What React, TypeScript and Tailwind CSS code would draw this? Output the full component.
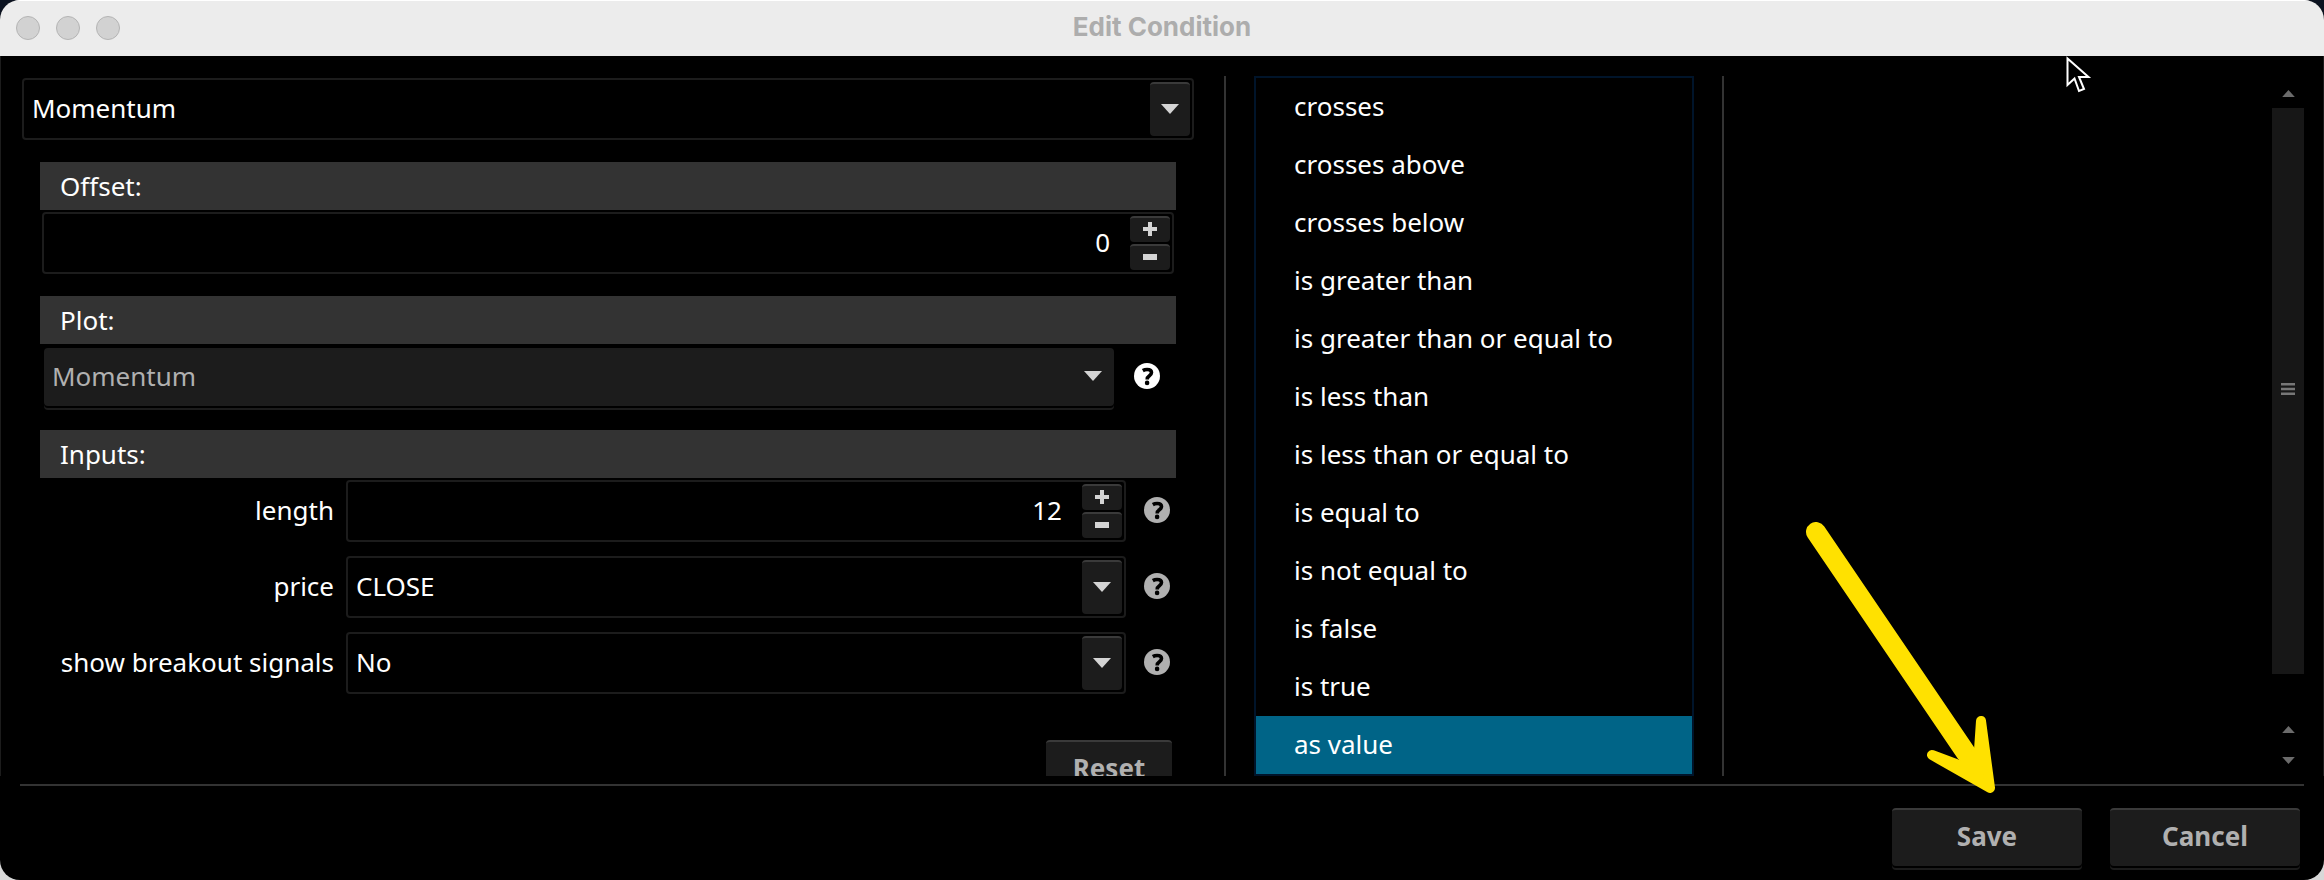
import { useState } from 'react';

const operators = [
  'crosses',
  'crosses above',
  'crosses below',
  'is greater than',
  'is greater than or equal to',
  'is less than',
  'is less than or equal to',
  'is equal to',
  'is not equal to',
  'is false',
  'is true',
  'as value',
];

function Triangle({ up = false, className }: { up?: boolean; className: string }) {
  return (
    <svg viewBox="0 0 18 10" className={className} fill="currentColor" aria-hidden="true">
      <path d={up ? 'M0 10h18L9 0z' : 'M0 0h18L9 10z'} />
    </svg>
  );
}

function Help({ label, className }: { label: string; className: string }) {
  return (
    <button type="button" aria-label={label} className={className}>
      <svg viewBox="0 0 26 26" className="size-[26px]" aria-hidden="true">
        <circle cx="13" cy="13" r="13" fill="currentColor" />
        <path d="M8.8 7.6C10 6.9 11.4 6.5 13.1 6.5c2.8 0 4.4 1.2 4.4 3.1 0 1.4-.8 2.2-2.1 3.1-1.5 1-2.2 1.7-2.2 3.7" fill="none" stroke="#000" strokeWidth="3.6" />
        <circle cx="13.1" cy="19.9" r="2.3" fill="#000" />
      </svg>
    </button>
  );
}

function SelectBox({ id, label, options }: { id: string; label?: string; options: string[] }) {
  return (
    <div className="relative h-[62px] min-w-0 flex-1 rounded-sm border-2 border-[#1c1c1c]">
      <select id={id} aria-label={label} className="h-full w-full appearance-none bg-transparent pr-12 pb-0.5 pl-2 text-white outline-none">
        {options.map((o) => <option key={o} className="bg-black">{o}</option>)}
      </select>
      <span className="pointer-events-none absolute inset-y-0.5 right-0.5 flex w-10 items-center justify-center rounded-sm border-t-2 border-[#3a3a3a] bg-[#1c1c1c] pb-0.5 text-[#d4d4d4]">
        <Triangle className="h-[10px] w-[18px]" />
      </span>
    </div>
  );
}

function SpinBox({ id, label, initial }: { id: string; label?: string; initial: number }) {
  const [value, setValue] = useState(initial);
  const step = 'flex flex-1 items-center justify-center rounded-sm border-t-2 border-[#3a3a3a] bg-[#1c1c1c] pb-0.5 text-[#d4d4d4]';
  return (
    <div className="flex h-[62px] min-w-0 flex-1 gap-5 rounded-sm border-2 border-[#1c1c1c] p-0.5">
      <input
        id={id}
        aria-label={label}
        inputMode="numeric"
        value={value}
        onChange={(e) => setValue(Number(e.target.value) || 0)}
        className="min-w-0 flex-1 bg-transparent pb-0.5 text-right text-white outline-none"
      />
      <div className="flex w-10 flex-col gap-0.5">
        <button type="button" aria-label="Increase" className={step} onClick={() => setValue(value + 1)}>
          <svg viewBox="0 0 14 14" className="size-[14px]" fill="currentColor"><path d="M5 0h4v5h5v4H9v5H5V9H0V5h5z" /></svg>
        </button>
        <button type="button" aria-label="Decrease" className={step} onClick={() => setValue(value - 1)}>
          <svg viewBox="0 0 14 14" className="size-[14px]" fill="currentColor"><path d="M0 4h14v6H0z" /></svg>
        </button>
      </div>
    </div>
  );
}

function Header({ children }: { children: string }) {
  return <h2 className="flex h-12 shrink-0 items-center bg-[#333333] px-5">{children}</h2>;
}

function InputRow({ id, label, children }: { id: string; label: string; children: React.ReactNode }) {
  return (
    <div className="flex items-center">
      <label htmlFor={id} className="mr-3 w-[294px] shrink-0 pb-0.5 text-right whitespace-nowrap">{label}</label>
      {children}
      <Help label={`About ${label}`} className="mr-1.5 ml-[18px] pb-0.5 text-[#b0b0b0]" />
    </div>
  );
}

function FooterButton({ children }: { children: string }) {
  return (
    <button type="button" className="h-[58px] w-[190px] rounded-sm border-t-2 border-[#3a3a3a] bg-[#1c1c1c] pb-1 font-bold text-[#b0b0b0] shadow-[0_2px_0_#000,0_4px_0_#1c1c1c]">
      {children}
    </button>
  );
}

export default function App() {
  const [operator, setOperator] = useState('as value');

  return (
    <div className="h-screen bg-[linear-gradient(#0b1220_50%,#d8d8d8_50%)] font-['Noto_Sans',sans-serif] text-[26px] leading-8 text-white">
      <div className="relative flex h-full flex-col overflow-hidden rounded-[20px] bg-black">
        <header className="relative flex h-14 shrink-0 items-center justify-center border-t border-white bg-[#ececec] pb-1">
          <div className="absolute top-[15px] left-4 flex gap-4">
            <button type="button" aria-label="Close" className="size-6 rounded-full border border-[#b4b4b4] bg-[#d2d2d2]" />
            <button type="button" aria-label="Minimize" className="size-6 rounded-full border border-[#b4b4b4] bg-[#d2d2d2]" />
            <button type="button" aria-label="Zoom" className="size-6 rounded-full border border-[#b4b4b4] bg-[#d2d2d2]" />
          </div>
          <h1 className="font-['Inter',sans-serif] font-bold text-[#adadad]">Edit Condition</h1>
        </header>

        <main className="flex min-h-0 flex-1 border-x border-[#1c1c1c] pt-5 pr-[19px] pl-[21px]">
          <section className="flex min-w-0 flex-[1172] flex-col overflow-hidden pt-0.5">
            <div className="flex shrink-0">
              <SelectBox id="study" label="Study" options={['Momentum']} />
            </div>

            <div className="mx-[18px] mt-[22px] flex flex-col">
              <Header>Offset:</Header>
              <div className="mx-0.5 mt-0.5 mb-[22px] flex">
                <SpinBox id="offset" label="Offset" initial={0} />
              </div>

              <Header>Plot:</Header>
              <div className="mt-1 mb-6 ml-1 flex items-center">
                <div className="relative h-[58px] min-w-0 flex-1 rounded-sm bg-[#1c1c1c] shadow-[0_2px_0_#000,0_4px_0_#1c1c1c]">
                  <select disabled aria-label="Plot" className="h-full w-full appearance-none bg-transparent pb-0.5 pl-2 text-[#b0b0b0] opacity-100">
                    <option>Momentum</option>
                  </select>
                  <Triangle className="pointer-events-none absolute top-[23px] right-3 h-[10px] w-[18px] text-[#d4d4d4]" />
                </div>
                <Help label="About plot" className="mr-4 ml-5 pb-0.5 text-white" />
              </div>

              <Header>Inputs:</Header>
              <div className="mt-0.5 flex flex-col gap-3.5">
                <InputRow id="length" label="length"><SpinBox id="length" initial={12} /></InputRow>
                <InputRow id="price" label="price"><SelectBox id="price" options={['CLOSE', 'OPEN', 'HIGH', 'LOW']} /></InputRow>
                <InputRow id="signals" label="show breakout signals"><SelectBox id="signals" options={['No', 'Yes']} /></InputRow>
              </div>
              <button type="button" className="mt-[46px] mr-1 h-[58px] w-[126px] shrink-0 self-end rounded-sm border-t-2 border-[#3a3a3a] bg-[#1c1c1c] pb-1 font-bold text-[#b0b0b0]">
                Reset
              </button>
            </div>
          </section>

          <div className="mr-7 ml-[30px] w-0.5 bg-[#333333]" />

          <ul role="listbox" aria-label="Operator" className="min-w-0 flex-[436] overflow-hidden border-2 border-[#00142a]">
            {operators.map((o) => (
              <li key={o} role="option" aria-selected={o === operator}>
                <button
                  type="button"
                  onClick={() => setOperator(o)}
                  className={`block h-[58px] w-full pb-0.5 pl-[38px] text-left whitespace-nowrap ${o === operator ? 'bg-[#006487]' : ''}`}
                >
                  {o}
                </button>
              </li>
            ))}
          </ul>

          <div className="ml-7 w-0.5 bg-[#333333]" />

          <section className="flex min-w-0 flex-[580] justify-end">
            <div className="flex w-8 flex-col items-center text-[#6b6b6b]">
              <Triangle up className="mt-3.5 mb-[11px] h-[7px] w-[13px]" />
              <div className="flex w-full flex-1 items-center justify-center bg-[#171717] pb-1">
                <svg viewBox="0 0 14 12" className="h-3 w-3.5" stroke="#777" strokeWidth="2.4"><path d="M0 1.2h14M0 6h14M0 10.8h14" /></svg>
              </div>
              <Triangle up className="mt-[52px] h-[7px] w-[13px]" />
              <Triangle className="mt-6 mb-3 h-[7px] w-[13px]" />
            </div>
          </section>
        </main>

        <footer className="mx-5 mt-2 flex shrink-0 justify-end gap-7 border-t-2 border-[#333333] pt-[22px] pr-1 pb-3.5">
          <FooterButton>Save</FooterButton>
          <FooterButton>Cancel</FooterButton>
        </footer>

        {/* callout arrow pointing at Save */}
        <svg viewBox="0 0 200 274" className="pointer-events-none absolute right-[324px] bottom-[84px] h-[274px] w-[200px]" fill="#ffe100" stroke="#ffe100" aria-hidden="true">
          <path d="M16 10L166 231" strokeWidth="20" strokeLinecap="round" />
          <path d="M181 199L190 266L132 233L164 245L179 228z" strokeWidth="10" strokeLinejoin="round" />
        </svg>

        <svg viewBox="0 0 26 40" className="pointer-events-none absolute top-14 right-[232px] h-10 w-[26px]" aria-hidden="true">
          <path d="M1.5 2.5V29l7-6.5 4.5 12.5 5-2-5-12h9.5z" fill="#000" stroke="#fff" strokeWidth="2" />
        </svg>
      </div>
    </div>
  );
}
